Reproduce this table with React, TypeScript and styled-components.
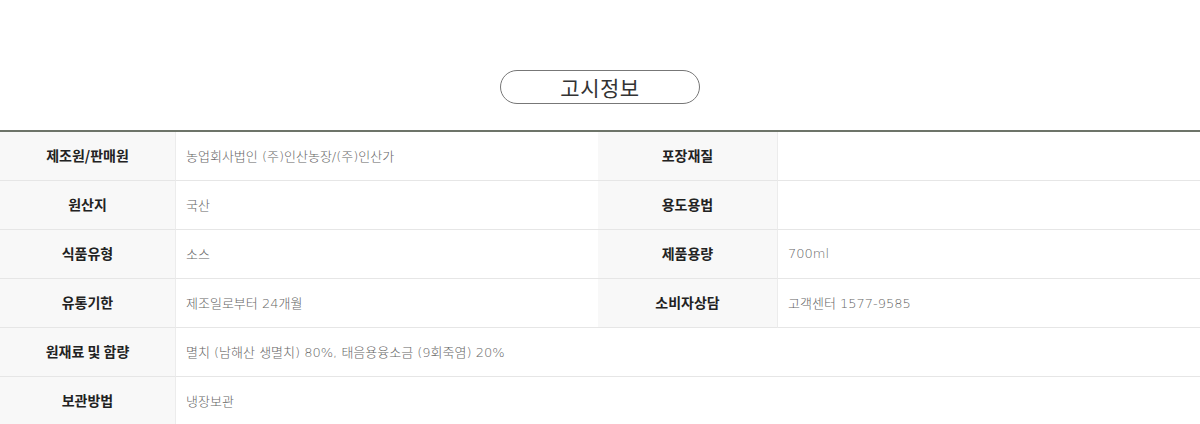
import React, { FC } from 'react';
import styled, { createGlobalStyle } from 'styled-components';

const GlobalStyle = createGlobalStyle`
    body {
        margin: 0;
        background: #fff;
        font-family: "Noto Sans CJK KR", "Noto Sans", sans-serif;
    }
`;

const Section = styled.section`
    width: 1200px;
    padding-top: 70px;
`;

const TitleWrap = styled.div`
    display: flex;
    justify-content: center;
    margin-bottom: 26px;
`;

const TitlePill = styled.h2`
    margin: 0;
    width: 198px;
    height: 31px;
    border: 1px solid #777;
    border-radius: 20px;
    display: flex;
    align-items: center;
    justify-content: center;
    font-size: 21px;
    font-weight: 400;
    color: #333;
    letter-spacing: 0.5px;
    padding-bottom: 1px;
    box-sizing: content-box;
`;

const Table = styled.div`
    display: grid;
    grid-template-columns: 176px 422px 180px 1fr;
    border-top: 2px solid #6d7469;
`;

const Label = styled.div`
    height: 46px;
    padding-bottom: 2px;
    border-bottom: 1px solid #e6e6e6;
    background: #f8f8f8;
    border-right: 1px solid #ececec;
    display: flex;
    align-items: center;
    justify-content: center;
    font-size: 14px;
    font-weight: 700;
    color: #222;
`;

const Value = styled.div<{ $span?: number }>`
    grid-column: span ${p => p.$span || 1};
    height: 46px;
    padding: 0 0 2px 10px;
    border-bottom: 1px solid #e6e6e6;
    display: flex;
    align-items: center;
    font-family: "DejaVu Sans", "Noto Sans CJK KR", sans-serif;
    font-size: 13px;
    font-weight: 300;
    color: #666;
`;

interface IRow {
    label: string;
    value: string;
    label2?: string;
    value2?: string;
}

const rows: IRow[] = [
    { label: "제조원/판매원", value: "농업회사법인 (주)인산농장/(주)인산가", label2: "포장재질", value2: "" },
    { label: "원산지", value: "국산", label2: "용도용법", value2: "" },
    { label: "식품유형", value: "소스", label2: "제품용량", value2: "700ml" },
    { label: "유통기한", value: "제조일로부터 24개월", label2: "소비자상담", value2: "고객센터 1577-9585" },
    { label: "원재료 및 함량", value: "멸치 (남해산 생멸치) 80%, 태음용융소금 (9회죽염) 20%" },
    { label: "보관방법", value: "냉장보관" },
];

const App: FC = () => {
    return (
        <>
            <GlobalStyle />
            <Section>
                <TitleWrap>
                    <TitlePill>고시정보</TitlePill>
                </TitleWrap>
                <Table>
                    {rows.map(r => (
                        <React.Fragment key={r.label}>
                            <Label>{r.label}</Label>
                            {r.label2 !== undefined ? (
                                <>
                                    <Value>{r.value}</Value>
                                    <Label>{r.label2}</Label>
                                    <Value>{r.value2}</Value>
                                </>
                            ) : (
                                <Value $span={3}>{r.value}</Value>
                            )}
                        </React.Fragment>
                    ))}
                </Table>
            </Section>
        </>
    );
}

export default App
